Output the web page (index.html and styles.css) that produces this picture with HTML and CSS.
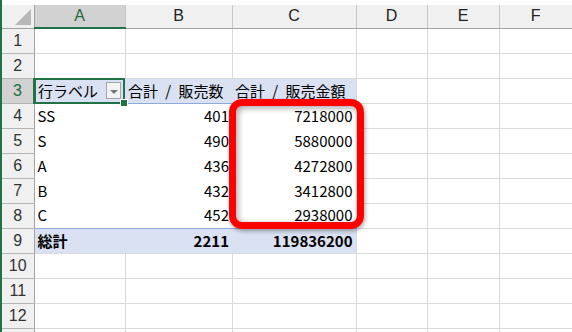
FILE: index.html
```html
<!DOCTYPE html>
<html lang="ja">
<head>
    <meta charset="UTF-8">
    <title>ピボットテーブル</title>
    <link rel="stylesheet" href="styles.css">
</head>
<body>
    <div class="sheet">
        <table class="grid">
            <colgroup>
                <col class="c-head">
                <col class="c-a">
                <col class="c-b">
                <col class="c-c">
                <col class="c-d">
                <col class="c-e">
                <col class="c-f">
            </colgroup>
            <tr class="col-heads">
                <th class="corner"><span class="tri"></span></th>
                <th class="sel-col">A</th>
                <th>B</th>
                <th>C</th>
                <th>D</th>
                <th>E</th>
                <th>F</th>
            </tr>
            <tr><th class="rh">1</th><td></td><td></td><td></td><td></td><td></td><td></td></tr>
            <tr><th class="rh">2</th><td></td><td></td><td></td><td></td><td></td><td></td></tr>
            <tr class="pv-head">
                <th class="rh sel-row">3</th>
                <td class="pv"><div class="label-cell"><span>行ラベル</span><span class="drop"></span></div></td>
                <td class="pv field">合計 / 販売数</td>
                <td class="pv field">合計 / 販売金額</td>
                <td></td><td></td><td></td>
            </tr>
            <tr class="pv-row"><th class="rh">4</th><td class="pv">SS</td><td class="pv num">401</td><td class="pv num">7218000</td><td></td><td></td><td></td></tr>
            <tr class="pv-row"><th class="rh">5</th><td class="pv">S</td><td class="pv num">490</td><td class="pv num">5880000</td><td></td><td></td><td></td></tr>
            <tr class="pv-row"><th class="rh">6</th><td class="pv">A</td><td class="pv num">436</td><td class="pv num">4272800</td><td></td><td></td><td></td></tr>
            <tr class="pv-row"><th class="rh">7</th><td class="pv">B</td><td class="pv num">432</td><td class="pv num">3412800</td><td></td><td></td><td></td></tr>
            <tr class="pv-row last"><th class="rh">8</th><td class="pv">C</td><td class="pv num">452</td><td class="pv num">2938000</td><td></td><td></td><td></td></tr>
            <tr class="pv-total">
                <th class="rh">9</th>
                <td class="pv">総計</td>
                <td class="pv num">2211</td>
                <td class="pv num">119836200</td>
                <td></td><td></td><td></td>
            </tr>
            <tr><th class="rh">10</th><td></td><td></td><td></td><td></td><td></td><td></td></tr>
            <tr><th class="rh">11</th><td></td><td></td><td></td><td></td><td></td><td></td></tr>
            <tr><th class="rh">12</th><td></td><td></td><td></td><td></td><td></td><td></td></tr>
            <tr><th class="rh"></th><td></td><td></td><td></td><td></td><td></td><td></td></tr>
        </table>

        <!-- active cell A3 -->
        <div class="selection"><span class="handle"></span></div>

        <!-- highlight round the amounts -->
        <div class="callout"></div>
    </div>
</body>
</html>
```

FILE: styles.css
```css
body {
    margin: 0;
    background-color: #fff;
    font-family: "Noto Sans CJK JP", "Noto Sans", sans-serif;
    overflow: hidden;
}

.sheet {
    position: relative;
    width: 572px;
    height: 332px;
    padding-top: 5px;
    box-sizing: border-box;
    border-left: 2px solid #217346;
    overflow: hidden;
}

.grid {
    border-collapse: collapse;
    table-layout: fixed;
    width: 570px;
    font-size: 15px;
    color: #000;
}

.c-head { width: 32px; }
.c-a { width: 91px; }
.c-b { width: 107px; }
.c-c { width: 124px; }
.c-d { width: 71px; }
.c-e { width: 72px; }
.c-f { width: 73px; }

.grid td,
.grid th {
    padding: 0 3px;
    height: 25px;
    line-height: 24px;
    box-sizing: border-box;
    white-space: nowrap;
    overflow: hidden;
    border: 1px solid #dadada;
    font-weight: normal;
}

.grid td:last-child {
    border-right: 1px solid #b8b8b8;
}

/* column headers */
.col-heads th {
    height: 23px;
    line-height: 22px;
    background-color: #f0f0f0;
    color: #222;
    text-align: center;
    font-family: "Liberation Sans", Arial, sans-serif;
    font-size: 16px;
    border: none;
    border-left: 1px solid #c6c6c6;
    border-bottom: 1px solid #a3a3a3;
}

.col-heads th.corner {
    position: relative;
    border-left: none;
    border-right: 1px solid #a3a3a3;
}

.tri {
    position: absolute;
    right: 3px;
    bottom: 3px;
    width: 0;
    height: 0;
    border-left: 16px solid transparent;
    border-bottom: 16px solid #b8b8b8;
}

.col-heads th.sel-col {
    background-color: #d2d2d2;
    color: #1e6b41;
    border-bottom: 2px solid #217346;
}

/* row headers */
.grid th.rh {
    background-color: #f0f0f0;
    color: #333;
    text-align: center;
    font-family: "Liberation Sans", Arial, sans-serif;
    font-size: 16px;
    border: none;
    border-bottom: 1px solid #b4b4b4;
    border-right: 1px solid #a3a3a3;
    padding: 0;
}

.grid th.sel-row {
    background-color: #d2d2d2;
    color: #1e6b41;
    border-right: 2px solid #217346;
}

/* pivot table */
.grid td.pv {
    border-left: none;
    border-right: none;
    border-top: none;
    border-bottom: none;
}

.grid td.pv:nth-child(4) {
    border-right: 1px solid #dadada;
}

.pv-head td.pv {
    background-color: #d9e1f2;
    border-bottom: 1px solid #8ea9db;
}

.pv-head td.field {
    word-spacing: 4px;
}

.pv-row.last td.pv {
    border-bottom: 1px solid #8ea9db;
}

.pv-total td.pv {
    background-color: #d9e1f2;
    font-weight: bold;
}

.num {
    text-align: right;
}

.label-cell {
    display: flex;
    justify-content: space-between;
    align-items: center;
}

.drop {
    position: relative;
    width: 15px;
    height: 17px;
    margin-right: 1px;
    box-sizing: border-box;
    border: 1px solid #a6a6a6;
    background-color: #f3f3f3;
}

.drop::after {
    content: "";
    position: absolute;
    left: 3px;
    top: 7px;
    border-left: 4px solid transparent;
    border-right: 4px solid transparent;
    border-top: 4px solid #777;
}

.selection {
    position: absolute;
    left: 32px;
    top: 78px;
    width: 91px;
    height: 26px;
    box-sizing: border-box;
    border: 2px solid #217346;
    pointer-events: none;
}

.handle {
    position: absolute;
    right: -5px;
    bottom: -5px;
    width: 6px;
    height: 6px;
    background-color: #217346;
    border: 1px solid #fff;
}

.callout {
    position: absolute;
    left: 227px;
    top: 99px;
    width: 135px;
    height: 130px;
    box-sizing: border-box;
    border: 7px solid #ff0000;
    border-radius: 13px;
    box-shadow: 1px 2px 4px rgba(0, 0, 0, 0.35), inset 2px 2px 6px rgba(0, 0, 0, 0.35);
}
```
